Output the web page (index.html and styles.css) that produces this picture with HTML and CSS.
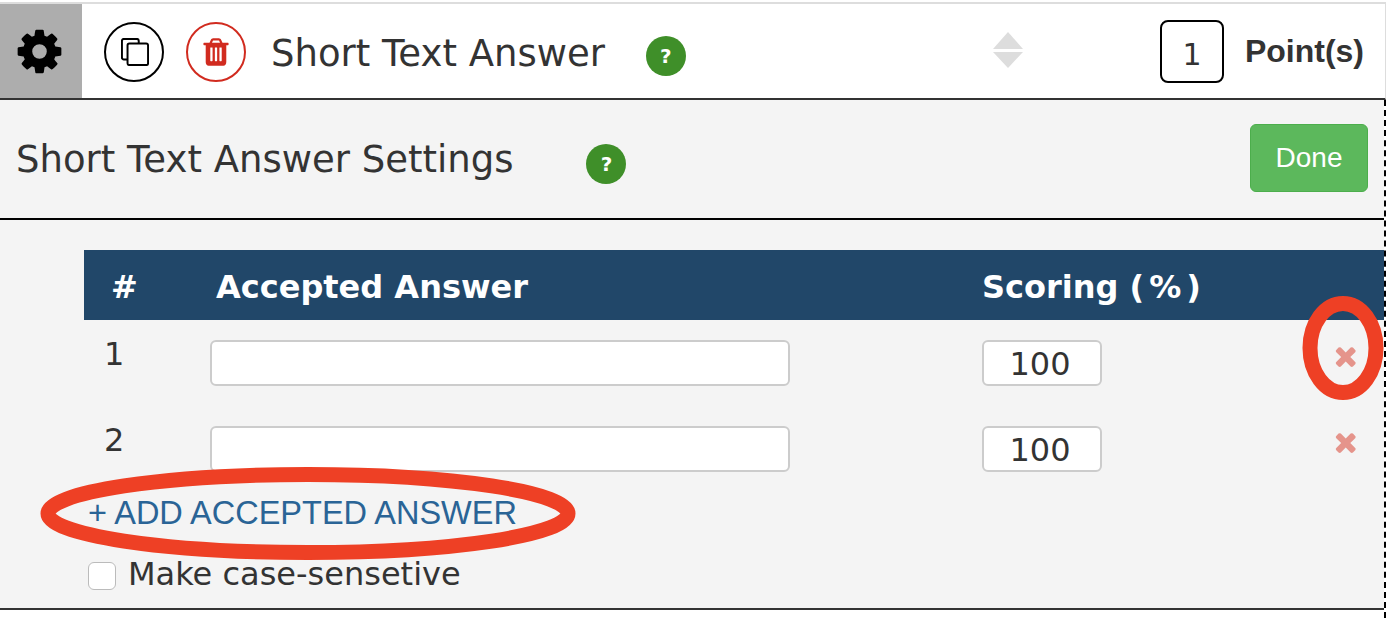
FILE: index.html
```html
<!DOCTYPE html>
<html lang="en">
  <head>
    <meta charset="UTF-8" />
    <meta name="viewport" content="width=device-width, initial-scale=1.0" />
    <title>Short Text Answer</title>
    <link rel="stylesheet" href="styles.css">
  </head>
  <body>
    <div class="page">
      <div class="question-bar">
        <div class="gear-box">
          <svg class="gear" viewBox="0 0 1792 1792"><path d="M1152 896q0-106-75-181t-181-75-181 75-75 181 75 181 181 75 181-75 75-181zm512-109v222q0 12-8 23t-20 13l-185 28q-19 54-39 91 35 50 107 138 10 12 10 25t-9 23q-27 37-99 108t-94 71q-12 0-26-9l-138-108q-44 23-91 38-16 136-29 186-7 28-36 28h-222q-14 0-24.500-8.500t-11.500-21.500l-28-184q-49-16-90-37l-141 107q-10 9-25 9-14 0-25-11-126-114-165-168-7-10-7-23 0-12 8-23 15-21 51-66.500t54-70.500q-27-50-41-99l-183-27q-13-2-21-12.500t-8-23.500v-222q0-12 8-23t19-13l186-28q14-46 39-92-40-57-107-138-10-12-10-24 0-10 9-23 26-36 98.500-107.500t94.500-71.500q13 0 26 10l138 107q44-23 91-38 16-136 29-186 7-28 36-28h222q14 0 24.500 8.500t11.500 21.500l28 184q49 16 90 37l142-107q9-9 24-9 13 0 25 10 129 119 165 170 7 8 7 22 0 12-8 23-15 21-51 66.500t-54 70.500q26 50 41 98l183 28q13 2 21 12.500t8 23.500z"/></svg>
        </div>
        <div class="round-btn copy-btn">
          <svg class="copy-icon" viewBox="0 0 30 30">
            <path d="M7 23H3a2 2 0 0 1-2-2V3a2 2 0 0 1 2-2h14a2 2 0 0 1 2 2v3"/>
            <rect x="7" y="6" width="22" height="23" rx="2"/>
          </svg>
        </div>
        <div class="round-btn trash-btn">
          <svg class="trash-icon" viewBox="0 0 1792 1792"><path d="M704 1376v-704q0-14-9-23t-23-9h-64q-14 0-23 9t-9 23v704q0 14 9 23t23 9h64q14 0 23-9t9-23zm256 0v-704q0-14-9-23t-23-9h-64q-14 0-23 9t-9 23v704q0 14 9 23t23 9h64q14 0 23-9t9-23zm256 0v-704q0-14-9-23t-23-9h-64q-14 0-23 9t-9 23v704q0 14 9 23t23 9h64q14 0 23-9t9-23zm-544-992h448l-48-117q-7-9-17-11h-317q-10 2-17 11zm928 32v64q0 14-9 23t-23 9h-96v948q0 83-47 143.500t-113 60.500h-832q-66 0-113-58.500t-47-141.500v-952h-96q-14 0-23-9t-9-23v-64q0-14 9-23t23-9h309l70-167q15-37 54-63t79-26h320q40 0 79 26t54 63l70 167h309q14 0 23 9t9 23z"/></svg>
        </div>
        <h2 class="question-title">Short Text Answer</h2>
        <span class="help help-top">?</span>
        <svg class="sort-icon" viewBox="0 0 30 36">
          <path d="M15 0l15 17H0z"/>
          <path d="M0 20h30L15 36z"/>
        </svg>
        <div class="points-box">1</div>
        <span class="points-label">Point(s)</span>
      </div>

      <div class="settings">
        <div class="settings-panel">
          <div class="settings-head">
            <h3 class="settings-title">Short Text Answer Settings</h3>
            <span class="help help-settings">?</span>
            <button class="done-btn">Done</button>
          </div>

          <div class="answers">
            <div class="answers-head">
              <span class="col-num">#</span>
              <span class="col-answer">Accepted Answer</span>
              <span class="col-score">Scoring <span class="percent">(%)</span></span>
            </div>
            <div class="answer-row">
              <span class="row-num">1</span>
              <input class="answer-input" type="text">
              <input class="score-input" type="text" value="100">
              <svg class="remove" viewBox="214 238 1276 1316"><path d="M1490 1322q0 40-28 68l-136 136q-28 28-68 28t-68-28l-294-294-294 294q-28 28-68 28t-68-28l-136-136q-28-28-28-68t28-68l294-294-294-294q-28-28-28-68t28-68l136-136q28-28 68-28t68 28l294 294 294-294q28-28 68-28t68 28l136 136q28 28 28 68t-28 68l-294 294 294 294q28 28 28 68z"/></svg>
            </div>
            <div class="answer-row">
              <span class="row-num">2</span>
              <input class="answer-input" type="text">
              <input class="score-input" type="text" value="100">
              <svg class="remove" viewBox="214 238 1276 1316"><path d="M1490 1322q0 40-28 68l-136 136q-28 28-68 28t-68-28l-294-294-294 294q-28 28-68 28t-68-28l-136-136q-28-28-28-68t28-68l294-294-294-294q-28-28-28-68t28-68l136-136q28-28 68-28t68 28l294 294 294-294q28-28 68-28t68 28l136 136q28 28 28 68t-28 68l-294 294 294 294q28 28 28 68z"/></svg>
            </div>
          </div>

          <a class="add-answer">+ ADD ACCEPTED ANSWER</a>
          <label class="case-check">
            <input type="checkbox">
            <span>Make case-sensetive</span>
          </label>
        </div>
      </div>

      <!-- red marks drawn over the screenshot -->
      <svg class="marks" viewBox="0 0 1388 618">
        <ellipse cx="1343" cy="348" rx="33" ry="44.500"/>
        <ellipse cx="308" cy="513.500" rx="260" ry="39"/>
      </svg>
    </div>
  </body>
</html>
```

FILE: styles.css
```css
* {
  margin: 0;
  padding: 0;
  box-sizing: border-box;
}

body {
  font-family: "DejaVu Sans", Verdana, sans-serif;
  background-color: #fff;
  color: #333;
  overflow: hidden;
}

.page {
  position: relative;
  width: 1388px;
  height: 618px;
  padding-top: 2px;
}

.question-bar {
  display: flex;
  align-items: center;
  width: 1386px;
  height: 98px;
  border-top: 2px solid #ddd;
  border-right: 1px solid #ddd;
  border-bottom: 2px solid #333;
}

.gear-box {
  display: flex;
  align-items: center;
  justify-content: center;
  width: 82px;
  height: 94px;
  background-color: #adadad;
}

.gear {
  width: 51px;
  height: 51px;
  margin-left: -4px;
}

.round-btn {
  display: flex;
  align-items: center;
  justify-content: center;
  width: 60px;
  height: 60px;
  margin-top: 2px;
  border-radius: 50%;
  border: 2px solid #000;
}

.copy-btn {
  margin-left: 22px;
}

.copy-icon {
  width: 28px;
  height: 28px;
  margin-left: 2px;
  fill: none;
  stroke: #000;
  stroke-width: 2.1;
}

.trash-btn {
  margin-left: 22px;
  border-color: #d12b1f;
}

.trash-icon {
  width: 32px;
  height: 32px;
  fill: #d12b1f;
}

.question-title {
  margin-left: 25px;
  margin-top: 4px;
  font-size: 37px;
  font-weight: normal;
  line-height: 1;
}

.help {
  display: flex;
  align-items: center;
  justify-content: center;
  width: 40px;
  height: 40px;
  border-radius: 50%;
  background-color: #3f8f29;
  color: #fff;
  font-size: 20px;
  font-weight: bold;
}

.help-top {
  margin-left: 41px;
  margin-top: 10px;
}

.sort-icon {
  width: 30px;
  height: 36px;
  margin-left: 307px;
  margin-top: -3px;
  fill: #ddd;
}

.points-box {
  display: flex;
  align-items: center;
  justify-content: center;
  width: 64px;
  height: 63px;
  margin-left: 137px;
  margin-top: 1px;
  padding-top: 6px;
  border: 2px solid #000;
  border-radius: 8px;
  font-size: 30px;
}

.points-label {
  margin-left: 21px;
  margin-top: 0;
  font-family: "Liberation Sans", Arial, sans-serif;
  font-size: 32px;
  font-weight: bold;
}

.settings {
  width: 1386px;
  height: 518px;
  border-right: 2px dashed #000;
}

.settings-panel {
  height: 510px;
  background-color: #f4f4f4;
  border-bottom: 2px solid #333;
}

.settings-head {
  display: flex;
  align-items: center;
  height: 120px;
  padding: 0 16px 0 16px;
  border-bottom: 2px solid #000;
}

.settings-title {
  font-size: 37px;
  font-weight: normal;
  line-height: 1;
}

.help-settings {
  margin-left: 73px;
  margin-top: 9px;
}

.done-btn {
  width: 118px;
  height: 68px;
  margin-left: auto;
  margin-top: -2px;
  background-color: #5cb85c;
  border: 1px solid #4cae4c;
  border-radius: 6px;
  color: #fff;
  font-family: "Liberation Sans", Arial, sans-serif;
  font-size: 28px;
}

.answers {
  margin: 30px 0 0 84px;
}

.answers-head {
  display: grid;
  grid-template-columns: 132px 766px 1fr;
  align-items: center;
  height: 70px;
  padding-top: 4px;
  background-color: #214769;
  color: #fff;
  font-size: 32px;
  font-weight: bold;
}

.col-num {
  padding-left: 27px;
}

.percent {
  letter-spacing: 5px;
}

.answer-row {
  display: grid;
  grid-template-columns: 126px 772px 120px 1fr;
  height: 86px;
  padding-top: 20px;
}

.row-num {
  padding-left: 20px;
  font-size: 32px;
  line-height: 28px;
}

.answer-row input {
  height: 46px;
  background-color: #fff;
  border: 2px solid #ccc;
  border-radius: 6px;
  font-family: "DejaVu Sans", Verdana, sans-serif;
  font-size: 32px;
  color: #333;
}

.answer-input {
  width: 580px;
}

.answer-row .score-input {
  width: 120px;
  padding: 2px 4px 0 0;
  text-align: center;
}

.remove {
  width: 22px;
  height: 22px;
  margin: 5px 0 0 232px;
  fill: #e5948b;
}

.add-answer {
  display: block;
  margin: 1px 0 0 88px;
  font-family: "Liberation Sans", Arial, sans-serif;
  font-size: 32.5px;
  line-height: 40px;
  color: #2a6496;
}

.case-check {
  display: flex;
  align-items: center;
  gap: 12px;
  margin: 23px 0 0 88px;
  font-size: 32px;
  line-height: 36px;
}

.case-check input {
  appearance: none;
  width: 28px;
  height: 28px;
  margin-top: 4px;
  background-color: #fff;
  border: 1px solid #bbb;
  border-radius: 6px;
}

.marks {
  position: absolute;
  top: 0;
  left: 0;
  width: 1388px;
  height: 618px;
  pointer-events: none;
  fill: none;
  stroke: #ee4025;
  stroke-width: 15;
}
```
